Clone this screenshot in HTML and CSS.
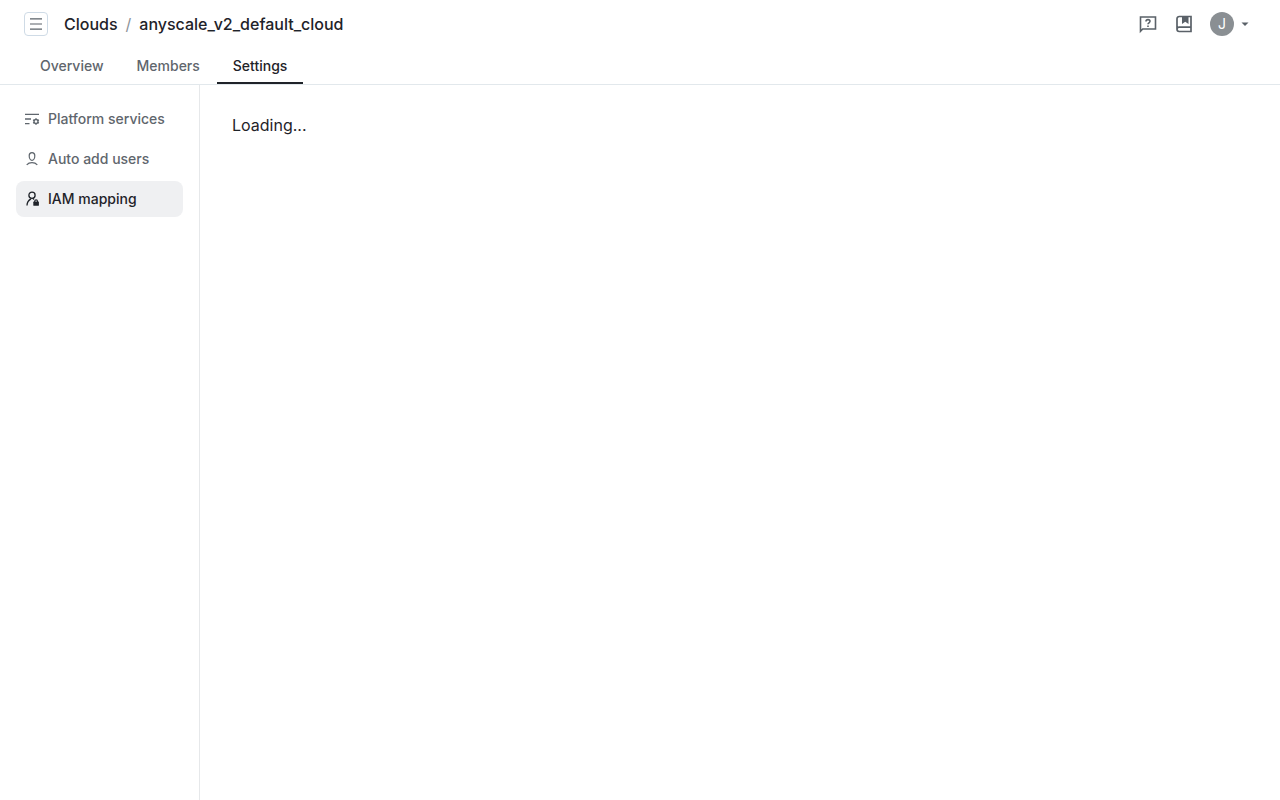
FILE: index.html
```html
<!DOCTYPE html>
<html lang="en">
<head>
<meta charset="utf-8">
<meta name="viewport" content="width=device-width, initial-scale=1">
<title>anyscale_v2_default_cloud</title>
<link rel="stylesheet" href="styles.css">
</head>
<body>
<header class="topbar">
  <button class="menu-button" type="button" aria-label="Open menu">
    <svg width="14" height="14" viewBox="0 0 14 14" fill="none" stroke="currentColor" stroke-width="1.2"><path d="M1 1.900h12M1 7h12M1 12.100h12"/></svg>
  </button>
  <nav class="breadcrumb" aria-label="Breadcrumb">
    <a href="#">Clouds</a>
    <span class="separator">/</span>
    <a href="#">anyscale_v2_default_cloud</a>
  </nav>
  <div class="actions">
    <button class="icon-button" type="button" aria-label="Help">
      <svg width="20" height="20" viewBox="0 0 20 20" fill="none" stroke="currentColor" stroke-width="1.600"><path d="M2.500 17.200V3h15v12H4.700L2.500 17.200Z"/><path d="M8 7.500c0-1.200.9-1.900 2-1.900s2 .7 2 1.700c0 1.500-2 1.500-2 3M10 11.500v1.600"/></svg>
    </button>
    <button class="icon-button" type="button" aria-label="Documentation">
      <svg width="20" height="20" viewBox="0 0 20 20" fill="none" stroke="currentColor" stroke-width="1.700"><path d="M17 13.200V2.500H5.200A2.200 2.200 0 0 0 3 4.700v10.600a2.200 2.200 0 0 0 2.200 2.200H17v-4.300H5.200A2.200 2.200 0 0 0 3 15.300"/><path d="M8 2.500h6.500V10l-3.250-2.200L8 10Z" fill="currentColor" stroke="none"/></svg>
    </button>
    <button class="account" type="button" aria-label="Account">
      <span class="avatar">J</span>
      <svg width="10" height="10" viewBox="0 0 10 10" fill="currentColor"><path d="M1.500 3.500h7L5 7Z"/></svg>
    </button>
  </div>
</header>
<nav class="tabs" aria-label="Cloud">
  <a class="tab" href="#">Overview</a>
  <a class="tab" href="#">Members</a>
  <a class="tab active" href="#" aria-current="page">Settings</a>
</nav>
<div class="layout">
  <nav class="sidebar" aria-label="Settings">
    <a class="side-link" href="#">
      <svg width="16" height="16" viewBox="0 0 16 16" fill="none" stroke="currentColor" stroke-width="1.300"><path d="M1 3.400h14M1 8h6M1 12.700h4.500"/><circle cx="12" cy="10.500" r="2"/><path d="M12 7.200v1.400M12 12.400v1.400M9.100 8.900l1.300.7M13.600 11.400l1.300.7M9.100 12.100l1.300-.7M13.600 9.600l1.300-.7"/></svg>
      Platform services
    </a>
    <a class="side-link" href="#">
      <svg width="16" height="16" viewBox="0 0 16 16" fill="none" stroke="currentColor" stroke-width="1.200"><path d="M8 1.700c1.700 0 2.800 1.200 2.800 3.100C10.800 7.300 9.600 9.300 8 9.300S5.200 7.300 5.200 4.800C5.200 2.900 6.300 1.700 8 1.700Z"/><path d="M2.700 13.800c1.200-1.300 3-2.100 5.300-2.100s4.100.8 5.300 2.100"/></svg>
      Auto add users
    </a>
    <a class="side-link active" href="#" aria-current="page">
      <svg width="16" height="16" viewBox="0 0 16 16" fill="none" stroke="currentColor" stroke-width="1.300"><circle cx="8" cy="4.200" r="3.100"/><path d="M3 14.500c0-3.200 1.500-5.200 4-6.600M8.800 7.300l1.200 1.200"/><path d="M10.700 11V10.300a1.400 1.400 0 0 1 2.800 0V11" stroke-width="1.100"/><rect x="9.300" y="10.600" width="5.600" height="4.200" rx=".6" fill="currentColor" stroke="none"/></svg>
      IAM mapping
    </a>
  </nav>
  <main class="content">Loading...</main>
</div>
</body>
</html>
```
FILE: styles.css
```css
* { box-sizing: border-box; }
body {
  margin: 0;
  min-height: 100vh;
  display: flex;
  flex-direction: column;
  background: #fff;
  color: #1f2329;
  font-family: Inter, "Liberation Sans", sans-serif;
  font-size: 16px;
  line-height: 24px;
}
a { color: inherit; text-decoration: none; }
button {
  padding: 0;
  border: 0;
  background: none;
  color: #5a6168;
  font: inherit;
  cursor: pointer;
}
svg { display: block; flex: none; }
.topbar {
  display: flex;
  align-items: center;
  gap: 16px;
  height: 48px;
  padding: 0 30px 0 24px;
}
.menu-button {
  display: grid;
  place-items: center;
  width: 24px;
  height: 24px;
  border: 1px solid #cfdbe6;
  border-radius: 4px;
}
.breadcrumb { display: flex; gap: 8px; font-weight: 500; }
.separator { color: #8d9399; font-weight: 400; }
.actions { display: flex; align-items: center; gap: 16px; margin-left: auto; }
.account { display: flex; align-items: center; gap: 6px; }
.avatar {
  width: 24px;
  height: 24px;
  border-radius: 50%;
  background: #8a8f93;
  color: #fff;
  font-size: 14px;
  text-align: center;
}
.tabs {
  display: flex;
  gap: 1px;
  padding: 0 24px;
  border-bottom: 1px solid #e2e8ec;
  color: #5f666d;
  font-size: 14px;
  font-weight: 500;
  line-height: 20px;
}
.tab { padding: 8px 16px 6px; border-bottom: 2px solid transparent; }
.tab.active { color: #1f2329; border-color: #1f2329; }
.layout { display: flex; flex: 1; }
.sidebar {
  display: flex;
  flex-direction: column;
  gap: 4px;
  width: 200px;
  padding: 16px;
  border-right: 1px solid #e6e8ea;
}
.side-link {
  display: flex;
  align-items: center;
  gap: 8px;
  padding: 8px;
  border-radius: 8px;
  color: #5f666d;
  font-size: 14px;
  font-weight: 500;
  line-height: 20px;
}
.side-link.active { background: #eff0f2; color: #1f2329; }
.content { flex: 1; padding: 28px 32px; }
```
